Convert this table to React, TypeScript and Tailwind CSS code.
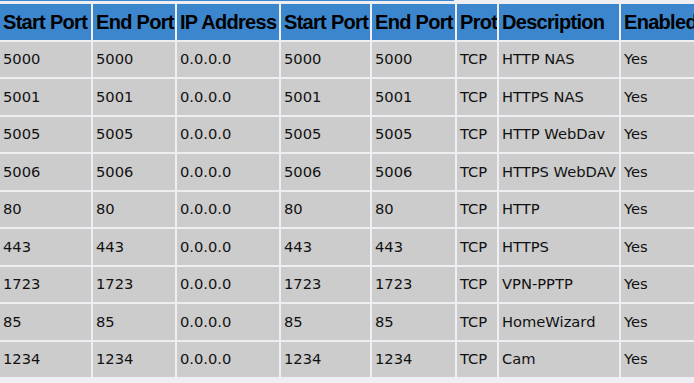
const headers = ['Start Port', 'End Port', 'IP Address', 'Start Port', 'End Port', 'Prot', 'Description', 'Enabled'];

const rules: [string, string, string, string, string][] = [
  ['5000', '5000', '5000', '5000', 'HTTP NAS'],
  ['5001', '5001', '5001', '5001', 'HTTPS NAS'],
  ['5005', '5005', '5005', '5005', 'HTTP WebDav'],
  ['5006', '5006', '5006', '5006', 'HTTPS WebDAV'],
  ['80', '80', '80', '80', 'HTTP'],
  ['443', '443', '443', '443', 'HTTPS'],
  ['1723', '1723', '1723', '1723', 'VPN-PPTP'],
  ['85', '85', '85', '85', 'HomeWizard'],
  ['1234', '1234', '1234', '1234', 'Cam'],
];

export default function App() {
  return (
    <div className="min-h-screen w-[694px] overflow-hidden bg-[#eeeef3]">
      <div className="h-px w-[454px] bg-[#3b86cd]" />
      <div
        className="mt-[3px] grid w-[740px] grid-cols-[91px_82px_102px_89px_83px_40px_120px_110px] auto-rows-[35.5px] gap-x-[2px] gap-y-[2px]"
        style={{ fontFamily: '"DejaVu Sans", Verdana, sans-serif' }}
      >
        {headers.map((h, i) => (
          <div
            key={i}
            className="flex items-center overflow-hidden whitespace-nowrap bg-[#3b86cd] pl-[3px] text-[20px] font-bold tracking-[-0.7px] text-black"
            style={{ fontFamily: '"Liberation Sans", Arial, sans-serif' }}
          >
            {h}
          </div>
        ))}
        {rules.map((r, i) => {
          const cells = [r[0], r[1], '0.0.0.0', r[2], r[3], 'TCP', r[4], 'Yes'];
          return cells.map((c, j) => (
            <div
              key={`${i}-${j}`}
              className="flex items-center overflow-hidden whitespace-nowrap bg-[#cccccc] pl-[3px] text-[14.7px] text-[#111]"
            >
              {c}
            </div>
          ));
        })}
      </div>
    </div>
  );
}
